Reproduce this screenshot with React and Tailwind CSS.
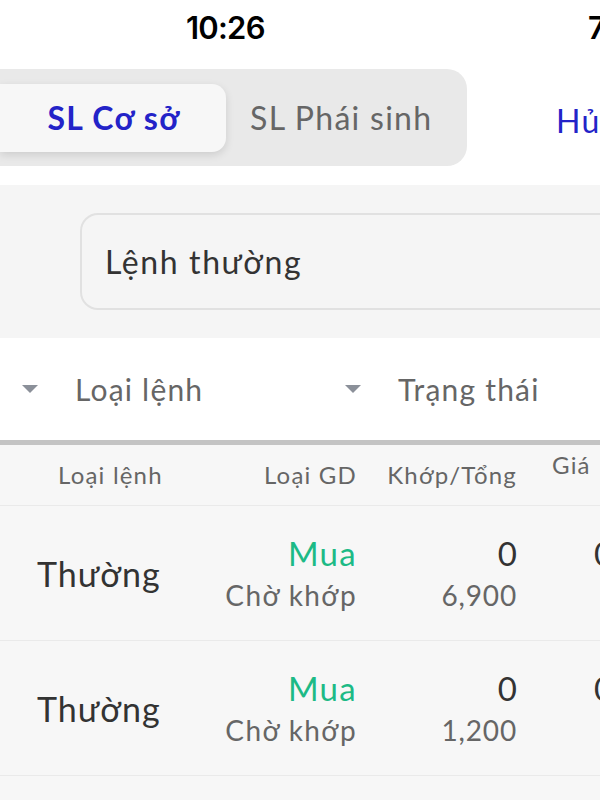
import React from 'react';

const rows = [
  { type: 'Thường', side: 'Mua', status: 'Chờ khớp', matched: '0', total: '6,900' },
  { type: 'Thường', side: 'Mua', status: 'Chờ khớp', matched: '0', total: '1,200' },
];

const Caret = () => (
  <svg width="16" height="8" viewBox="0 0 16 8" className="shrink-0">
    <path d="M0 0 L16 0 L8 8 Z" fill="#8b9099" />
  </svg>
);

export default function App() {
  return (
    <div className="w-[600px] h-[800px] overflow-hidden bg-white font-['Lato','Noto_Sans',sans-serif]">
      {/* Status bar */}
      <div className="relative h-[50px]">
        <span className="absolute left-[186px] top-[5px] text-[31px] font-semibold text-black font-['Inter',sans-serif] tracking-tight">
          10:26
        </span>
        <span className="absolute left-[588px] top-[5px] text-[31px] font-semibold text-black font-['Inter',sans-serif]">
          7
        </span>
      </div>

      {/* Segmented tabs */}
      <div className="h-[135px] pt-[19px] flex items-start">
        <div className="w-[467px] shrink-0 h-[97px] bg-[#e9e9e9] rounded-r-[20px] flex items-center">
          <div className="w-[226px] shrink-0 h-[68px] bg-[#f7f7f7] rounded-r-[14px] shadow-[0_3px_8px_rgba(0,0,0,0.12)] flex items-center justify-center">
            <span className="text-[32px] font-bold text-[#2323c8] tracking-[0.04em] pl-[2px]">SL Cơ sở</span>
          </div>
          <span className="ml-[24px] text-[32px] text-[#666666] tracking-[0.04em] whitespace-nowrap">SL Phái sinh</span>
        </div>
        <span className="ml-[89px] mt-[28px] shrink-0 text-[32px] text-[#2323c8] tracking-[0.04em] whitespace-nowrap">Hủy</span>
      </div>

      {/* Order type select */}
      <div className="h-[153px] bg-[#f5f5f5] flex items-center pl-[80px]">
        <div className="flex-1 h-[97px] -mr-[40px] border-2 border-[#e1e1e1] rounded-[18px] flex items-center pl-[23px]">
          <span className="text-[32px] text-[#333333] tracking-[0.05em]">Lệnh thường</span>
        </div>
      </div>

      {/* Filters */}
      <div className="h-[102px] flex items-center whitespace-nowrap">
        <div className="w-[345px] shrink-0 flex items-center pl-[22px]">
          <Caret />
          <span className="ml-[37px] text-[30px] text-[#666666] tracking-[0.04em]">Loại lệnh</span>
        </div>
        <Caret />
        <span className="ml-[37px] text-[30px] text-[#666666] tracking-[0.04em]">Trạng thái</span>
      </div>
      <div className="h-[5px] bg-[#c4c4c4]" />

      {/* Table */}
      <div className="bg-[#f7f7f7]">
        <div className="h-[61px] flex items-center border-b border-[#eaeaea] text-[24px] text-[#666666] tracking-[0.05em] whitespace-nowrap">
          <div className="w-[200px] shrink-0 pl-[58px]">Loại lệnh</div>
          <div className="w-[157px] shrink-0 text-right">Loại GD</div>
          <div className="w-[160px] shrink-0 text-right">Khớp/Tổng</div>
          <div className="shrink-0 pl-[35px] -mt-[20px]">Giá</div>
        </div>
        {rows.map((r, i) => (
          <div key={i} className="h-[135px] flex items-center border-b border-[#eaeaea] whitespace-nowrap">
            <div className="w-[200px] shrink-0 pl-[37px] text-[34px] text-[#333333] tracking-[0.03em]">{r.type}</div>
            <div className="w-[157px] shrink-0 text-right flex flex-col">
              <span className="text-[33px] leading-[44px] text-[#1dba86] tracking-[0.04em]">{r.side}</span>
              <span className="text-[28px] leading-[40px] text-[#666666] tracking-[0.05em]">{r.status}</span>
            </div>
            <div className="w-[160px] shrink-0 text-right flex flex-col">
              <span className="text-[33px] leading-[44px] text-[#333333]">{r.matched}</span>
              <span className="text-[28px] leading-[40px] text-[#666666] tracking-[0.03em]">{r.total}</span>
            </div>
            <div className="shrink-0 pl-[77px] flex flex-col">
              <span className="text-[33px] leading-[44px] text-[#333333]">0</span>
              <span className="text-[28px] leading-[40px] text-transparent">0</span>
            </div>
          </div>
        ))}
        <div className="h-[30px]" />
      </div>
    </div>
  );
}
